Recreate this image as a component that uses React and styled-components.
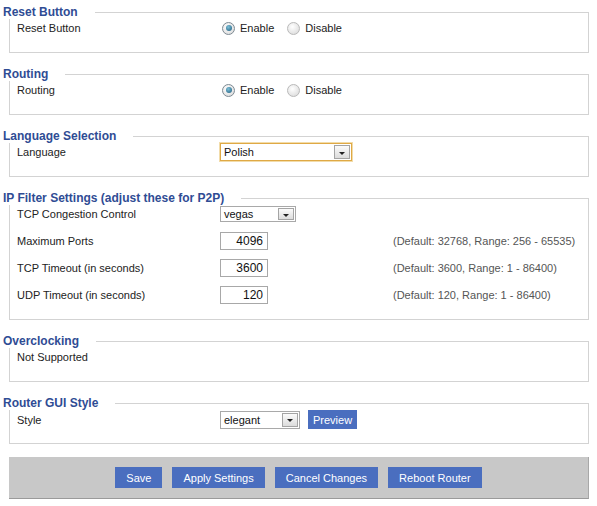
import React from 'react';
import styled, {createGlobalStyle} from 'styled-components';

const GlobalStyle = createGlobalStyle`
html, body {
  margin: 0;
  padding: 0;
  background: #fff;
}
body {
  font-family: "Liberation Sans", Arial, sans-serif;
  font-size: 11px;
  color: #222;
}
`

const Page = styled.div`
width: 580px;
margin-left: 9px;
padding-top: 5px;
display: flex;
flex-direction: column;
gap: 14px;
`

const Fieldset = styled.fieldset`
margin: 0;
min-width: 0;
border: 1px solid #d3d3d3;
padding: 0 7px 15px;
`

const Legend = styled.legend`
margin-left: -14px;
padding: 0 17px 0 0;
font-weight: bold;
font-size: 12px;
line-height: 14px;
color: #2f4c94;
`

const Body = styled.div`
display: flex;
flex-direction: column;
gap: ${p => p.$gap || 0}px;
`

const Row = styled.div`
display: grid;
grid-template-columns: 203px 173px 1fr;
align-items: center;
height: ${p => p.$h || 18}px;
`

const Label = styled.div`
color: #222;
`

const Field = styled.div`
display: flex;
align-items: center;
`

const Hint = styled.div`
color: #555;
white-space: nowrap;
`

const RadioOption = styled.label`
display: flex;
align-items: center;
gap: 5px;
margin-right: 13px;
&:first-child {
  margin-left: 2px;
}
`

const RadioDot = styled.span`
width: 11px;
height: 11px;
border-radius: 50%;
border: 1px solid ${p => p.$checked ? '#7d8a93' : '#b9b9b9'};
background: radial-gradient(circle at 40% 35%, #ffffff, #d6d6d6);
display: flex;
align-items: center;
justify-content: center;
&::after {
  content: '';
  display: ${p => p.$checked ? 'block' : 'none'};
  width: 6px;
  height: 6px;
  border-radius: 50%;
  background: radial-gradient(circle at 40% 35%, #7cc0d8, #1d5a7c);
}
`

const SelectBox = styled.div`
box-sizing: border-box;
width: ${p => p.$w}px;
height: ${p => p.$h}px;
border: 1px solid ${p => p.$focus ? '#dfa945' : '#a9a9a9'};
box-shadow: ${p => p.$focus ? '0 0 0 1px #f2dcaa' : 'none'};
background: #fff;
display: flex;
align-items: center;
padding-left: 3px;
color: #111;
`

const SelectArrow = styled.span`
box-sizing: border-box;
margin-left: auto;
margin-right: 1px;
width: 16px;
height: calc(100% - 2px);
border: 1px solid #a4a4a4;
background: linear-gradient(#fbfbfb, #dcdcdc);
display: flex;
align-items: center;
justify-content: center;
&::after {
  content: '';
  border-left: 3px solid transparent;
  border-right: 3px solid transparent;
  border-top: 3px solid #222;
  margin-top: 2px;
}
`

const NumberInput = styled.input`
box-sizing: border-box;
width: 48px;
height: 18px;
border: 1px solid #a8a8a8;
padding: 0 4px 0 0;
text-align: right;
font: inherit;
font-size: 12px;
color: #111;
background: #fff;
outline: none;
`

const BlueButton = styled.button`
height: ${p => p.$h || 21}px;
padding: 0 ${p => p.$px || 11}px;
border: none;
background: #4a6ebf;
color: #fff;
font: inherit;
font-size: 11px;
cursor: pointer;
`

const ButtonBar = styled.div`
margin-top: -1px;
height: 41px;
background: #c8c8c8;
border-bottom: 1px solid #9a9a9a;
border-right: 1px solid #a8a8a8;
display: flex;
align-items: center;
justify-content: center;
gap: 10px;
`

const Radio = ({checked, children}) => (
    <RadioOption>
        <RadioDot $checked={checked}/>
        {children}
    </RadioOption>
)

const Select = ({value, w, h, focus}) => (
    <SelectBox $w={w} $h={h} $focus={focus}>
        {value}
        <SelectArrow/>
    </SelectBox>
)

const EnableRow = ({label}) => (
    <Row>
        <Label>{label}</Label>
        <Field>
            <Radio checked>Enable</Radio>
            <Radio>Disable</Radio>
        </Field>
    </Row>
)

const ipRows = [
    {label: 'Maximum Ports', value: '4096', hint: '(Default: 32768, Range: 256 - 65535)'},
    {label: 'TCP Timeout (in seconds)', value: '3600', hint: '(Default: 3600, Range: 1 - 86400)'},
    {label: 'UDP Timeout (in seconds)', value: '120', hint: '(Default: 120, Range: 1 - 86400)'},
]

const App = () => {
    return (
        <>
            <GlobalStyle/>
            <Page>
                <Fieldset>
                    <Legend>Reset Button</Legend>
                    <Body>
                        <EnableRow label="Reset Button"/>
                    </Body>
                </Fieldset>

                <Fieldset>
                    <Legend>Routing</Legend>
                    <Body>
                        <EnableRow label="Routing"/>
                    </Body>
                </Fieldset>

                <Fieldset>
                    <Legend>Language Selection</Legend>
                    <Body>
                        <Row>
                            <Label>Language</Label>
                            <Field>
                                <Select value="Polish" w={132} h={18} focus/>
                            </Field>
                        </Row>
                    </Body>
                </Fieldset>

                <Fieldset>
                    <Legend>IP Filter Settings (adjust these for P2P)</Legend>
                    <Body $gap={9}>
                        <Row>
                            <Label>TCP Congestion Control</Label>
                            <Field>
                                <Select value="vegas" w={76} h={16}/>
                            </Field>
                        </Row>
                        {ipRows.map(r => (
                            <Row key={r.label}>
                                <Label>{r.label}</Label>
                                <Field>
                                    <NumberInput value={r.value} readOnly/>
                                </Field>
                                <Hint>{r.hint}</Hint>
                            </Row>
                        ))}
                    </Body>
                </Fieldset>

                <Fieldset>
                    <Legend>Overclocking</Legend>
                    <Body>
                        <Row $h={18}>
                            <Label>Not Supported</Label>
                        </Row>
                    </Body>
                </Fieldset>

                <Fieldset>
                    <Legend>Router GUI Style</Legend>
                    <Body>
                        <Row>
                            <Label>Style</Label>
                            <Field>
                                <Select value="elegant" w={80} h={18}/>
                                <BlueButton $h={19} $px={5} style={{marginLeft: 8}}>Preview</BlueButton>
                            </Field>
                        </Row>
                    </Body>
                </Fieldset>

                <ButtonBar>
                    <BlueButton>Save</BlueButton>
                    <BlueButton>Apply Settings</BlueButton>
                    <BlueButton>Cancel Changes</BlueButton>
                    <BlueButton>Reboot Router</BlueButton>
                </ButtonBar>
            </Page>
        </>
    )
}

export default App;
